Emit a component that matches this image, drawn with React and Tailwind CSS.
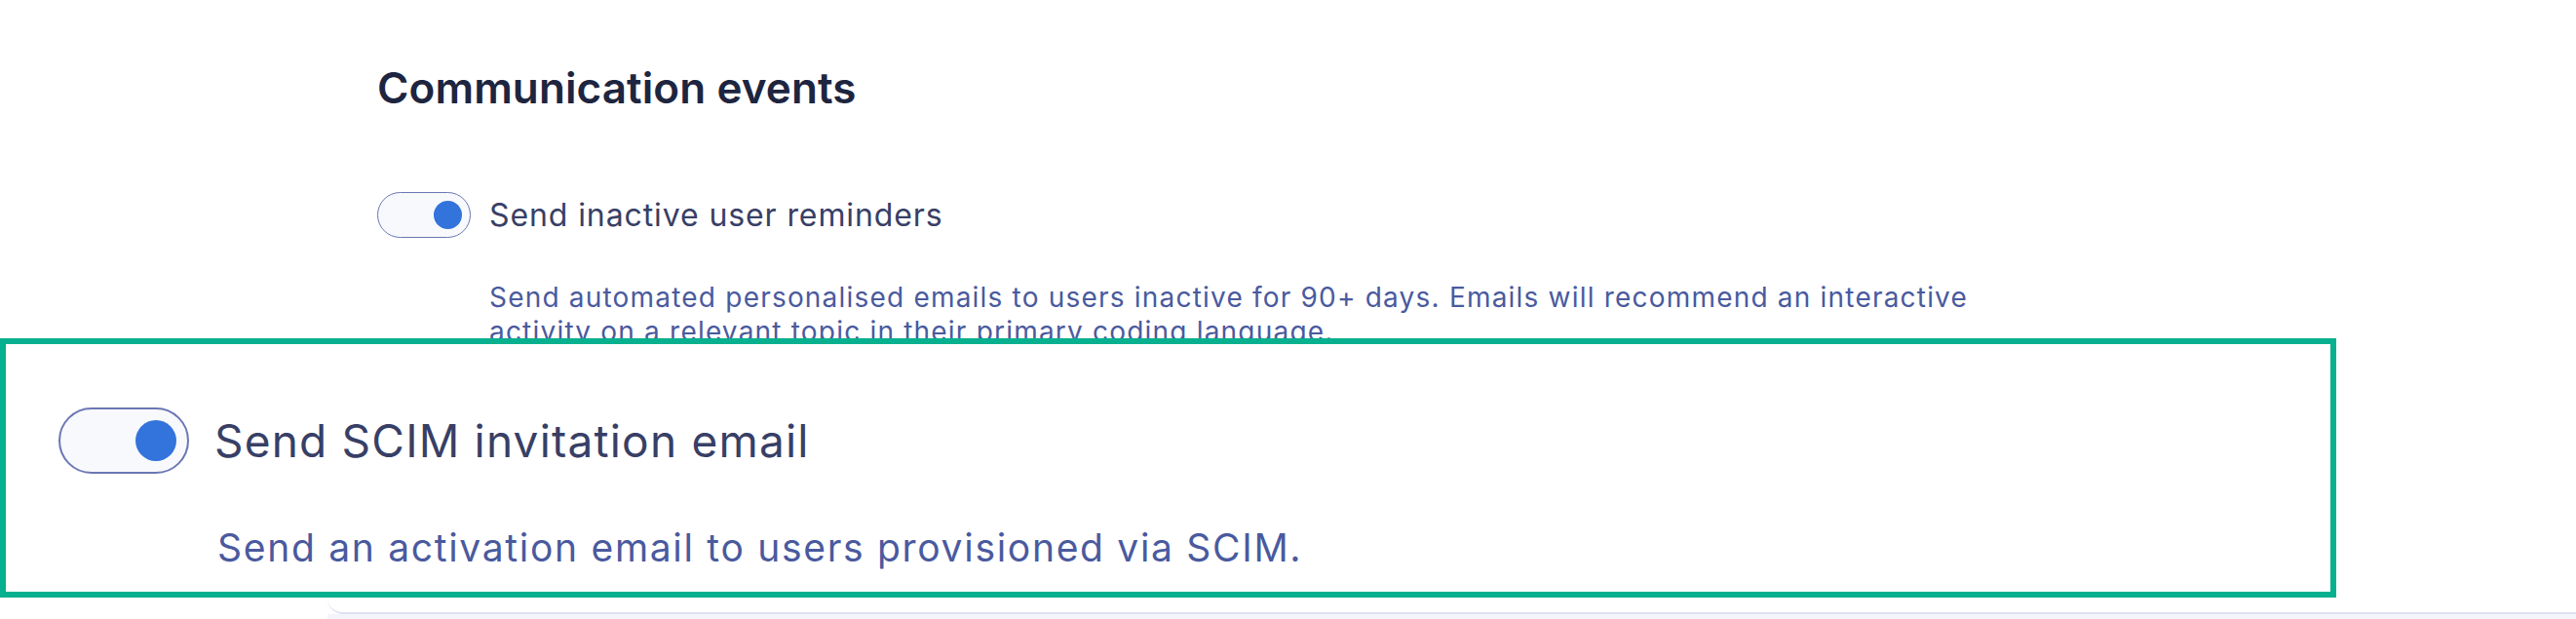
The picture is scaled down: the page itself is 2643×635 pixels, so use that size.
import React from "react";

function Toggle({ big }) {
  return big ? (
    <div className="flex h-[68px] w-[134px] shrink-0 items-center justify-end rounded-full border-2 border-[#6b77b3] bg-[#f8f9fc] pr-[11px]">
      <div className="h-[42px] w-[42px] rounded-full bg-[#3273dc]" />
    </div>
  ) : (
    <div className="flex h-[47px] w-[96px] shrink-0 items-center justify-end rounded-full border-[1.5px] border-[#6b77b3] bg-[#f8f9fc] pr-[8.5px]">
      <div className="h-[29px] w-[29px] rounded-full bg-[#3273dc]" />
    </div>
  );
}

export default function App() {
  return (
    <div
      className="relative flex h-[635px] w-[2643px] overflow-hidden bg-white"
      style={{ fontFamily: "Inter, 'Noto Sans', sans-serif" }}
    >
      <div className="w-[336px] shrink-0" />
      <div className="flex flex-1 flex-col">
        <div className="h-[630px] rounded-bl-[16px] border-b-2 border-[#dfe2f0] bg-white pl-[51px] pt-[68px]">
          <h2 className="text-[44px] font-semibold leading-[44px] tracking-[0.1px] text-[#1d2540]">
            Communication events
          </h2>
          <div className="mt-[85px] flex items-center gap-[19px]">
            <Toggle />
            <span className="text-[32px] leading-[40px] tracking-[0.9px] text-[#383f66]">
              Send inactive user reminders
            </span>
          </div>
          <p className="ml-[115px] mt-[44px] w-[1580px] text-[28px] leading-[35px] tracking-[1.2px] text-[#4a5a9e]">
            Send automated personalised emails to users inactive for 90+ days. Emails will recommend an interactive activity on a relevant topic in their primary coding language.
          </p>
        </div>
        <div className="h-[5px] bg-[#f4f5fa]" />
      </div>

      <div className="absolute left-0 top-[347px] h-[266px] w-[2397px] border-[6px] border-[#07b08e] bg-white pl-[54px] pt-[65px]">
        <div className="flex items-center gap-[26px]">
          <Toggle big />
          <span className="text-[46px] leading-[56px] tracking-[1.2px] text-[#383f66]">
            Send SCIM invitation email
          </span>
        </div>
        <p className="ml-[163px] mt-[53px] text-[39px] leading-[46px] tracking-[1.7px] text-[#4a5a9e]">
          Send an activation email to users provisioned via SCIM.
        </p>
      </div>
    </div>
  );
}
